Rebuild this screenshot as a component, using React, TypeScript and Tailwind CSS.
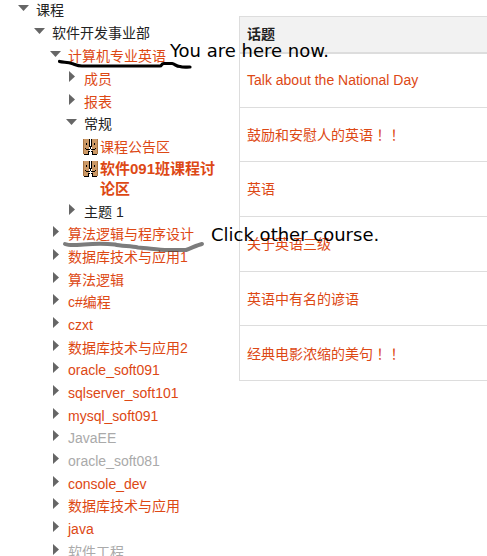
import { useState, type ReactNode } from "react";

interface Course {
  name: string;
  hidden?: boolean;
}

const courses: Course[] = [
  { name: "算法逻辑与程序设计" },
  { name: "数据库技术与应用1" },
  { name: "算法逻辑" },
  { name: "c#编程" },
  { name: "czxt" },
  { name: "数据库技术与应用2" },
  { name: "oracle_soft091" },
  { name: "sqlserver_soft101" },
  { name: "mysql_soft091" },
  { name: "JavaEE", hidden: true },
  { name: "oracle_soft081", hidden: true },
  { name: "console_dev" },
  { name: "数据库技术与应用" },
  { name: "java" },
  { name: "软件工程", hidden: true },
];

const topics: { title: string; mark?: string }[] = [
  { title: "Talk about the National Day" },
  { title: "鼓励和安慰人的英语", mark: "！！" },
  { title: "英语" },
  { title: "关于英语三级" },
  { title: "英语中有名的谚语" },
  { title: "经典电影浓缩的美句", mark: "！！" },
];

function ForumIcon() {
  return (
    <svg className="h-4 w-4 shrink-0" viewBox="0 0 16 16" shapeRendering="crispEdges" aria-hidden="true">
      <path fill="#cc9966" d="M0 0h6v15H0zM9 0h6v15H9z" />
      <path fill="#a87443" d="M0 0h1v15H0zM14 0h1v15h-1z" />
      <path
        fill="#000"
        d="M6 0h1v8H6zM8 0h1v8H8zM7 7h1v3H7zM6 10h1v1H6zM8 10h1v1H8zM5 12h1v3H5zM9 12h1v3H9zM6 12h1v1H6zM8 12h1v1H8zM3 4h1v2H3zM11 4h1v2h-1zM2 9h1v1H2zM3 10h3v1H3zM12 9h1v1h-1zM9 10h3v1H9zM1 15h5v1H1zM9 15h5v1H9z"
      />
    </svg>
  );
}

function Arrow({ open }: { open: boolean }) {
  return (
    <svg className="h-5 w-4" viewBox="0 0 16 20" fill="#666" aria-hidden="true">
      {open ? <path d="M0 5h11L5.5 11z" /> : <path d="M3 2v11l6-5.500z" />}
    </svg>
  );
}

interface BranchProps {
  label: string;
  link?: boolean;
  hidden?: boolean;
  defaultOpen?: boolean;
  className?: string;
  children?: ReactNode;
}

function Branch({ label, link, hidden, defaultOpen = false, className, children }: BranchProps) {
  const [open, setOpen] = useState(defaultOpen);

  return (
    <li className={className}>
      <div className="flex">
        <button type="button" aria-label={label} aria-expanded={open} onClick={() => setOpen(!open)} className="mr-0.5 shrink-0">
          <Arrow open={open} />
        </button>
        {link ? (
          <a href="#" className={hidden ? "text-[#aaa]" : "text-[#dd4814]"}>
            {label}
          </a>
        ) : (
          <span>{label}</span>
        )}
      </div>
      {open && children && <ul className="pl-4">{children}</ul>}
    </li>
  );
}

const rowClass = "pt-[3px] nth-[3n+2]:pt-0.5";
const sectionClass = "pt-[3px] nth-[3n]:pt-0.5";

function CourseTree() {
  return (
    <nav className="w-[218px] shrink-0 pl-[18px]">
      <ul>
        <Branch label="课程" defaultOpen>
          <Branch label="软件开发事业部" defaultOpen className={rowClass}>
            <Branch label="计算机专业英语" link defaultOpen className={rowClass}>
              <Branch label="成员" link className={sectionClass} />
              <Branch label="报表" link className={sectionClass} />
              <Branch label="常规" defaultOpen className={sectionClass}>
                <li className="flex pt-[3px] pl-px">
                  <span className="mr-px pt-0.5">
                    <ForumIcon />
                  </span>
                  <a href="#" className="text-[#dd4814]">
                    课程公告区
                  </a>
                </li>
                <li className="flex pt-0.5 pl-px">
                  <span className="mr-px pt-0.5">
                    <ForumIcon />
                  </span>
                  <a href="#" className="text-[15px] font-bold text-[#dd4814]">
                    软件091班课程讨论区
                  </a>
                </li>
              </Branch>
              <Branch label="主题 1" className={sectionClass} />
            </Branch>
            {courses.map((c) => (
              <Branch key={c.name} label={c.name} link hidden={c.hidden} className={rowClass} />
            ))}
          </Branch>
        </Branch>
      </ul>
    </nav>
  );
}

function TopicTable() {
  return (
    <div className="min-w-0 flex-1 pt-4 pl-[21px]">
      <table className="w-full border-collapse border-t border-l border-[#ddd] text-left">
        <thead>
          <tr className="h-9 border-b-2 border-[#ddd] bg-[#f2f2f2]">
            <th className="px-[7px] font-bold">话题</th>
          </tr>
        </thead>
        <tbody>
          {topics.map((t) => (
            <tr key={t.title} className="h-[55px] border-b border-[#ddd] nth-[3n+2]:h-[54px]">
              <td className="px-[7px]">
                <a href="#" className="text-[#dd4814]">
                  {t.title}
                  {t.mark && <span className="font-['Noto_Sans_CJK_TC',sans-serif]">{t.mark}</span>}
                </a>
              </td>
            </tr>
          ))}
        </tbody>
      </table>
    </div>
  );
}

// Hand-drawn notes on top of the page
function Annotations() {
  return (
    <div className="pointer-events-none absolute inset-0 font-['DejaVu_Sans',sans-serif] text-lg leading-5 whitespace-nowrap text-black">
      <svg className="absolute top-0 left-0" width="220" height="260" fill="none" strokeLinecap="round" strokeLinejoin="round" aria-hidden="true">
        <path
          stroke="#000"
          strokeWidth="3.2"
          d="M59.500 61.500C63 62.500 68 62 72 63.500C75 64.500 78 66 82 66H160C162 66 161 63.500 164 63.500H172C175 64 176 66.500 180 66.500C183 67.500 186 67 190 67"
        />
        <path
          stroke="#444"
          strokeOpacity="0.7"
          strokeWidth="4"
          d="M65 244C70 246 77 245 84 244.500C95 243.500 106 243.500 115 244.500C120 246 130 246 138 247.500C148 248 158 250 168 250H186C192 248 197 245 202 244"
        />
      </svg>
      <p className="absolute top-[41px] left-[170px]">You are here now.</p>
      <p className="absolute top-[225px] left-[211px]">Click other course.</p>
    </div>
  );
}

export default function App() {
  return (
    <main className="relative flex h-screen overflow-hidden bg-white font-['Liberation_Sans','Noto_Sans_CJK_SC',sans-serif] text-sm leading-5 text-[#222]">
      <CourseTree />
      <TopicTable />
      <Annotations />
    </main>
  );
}
